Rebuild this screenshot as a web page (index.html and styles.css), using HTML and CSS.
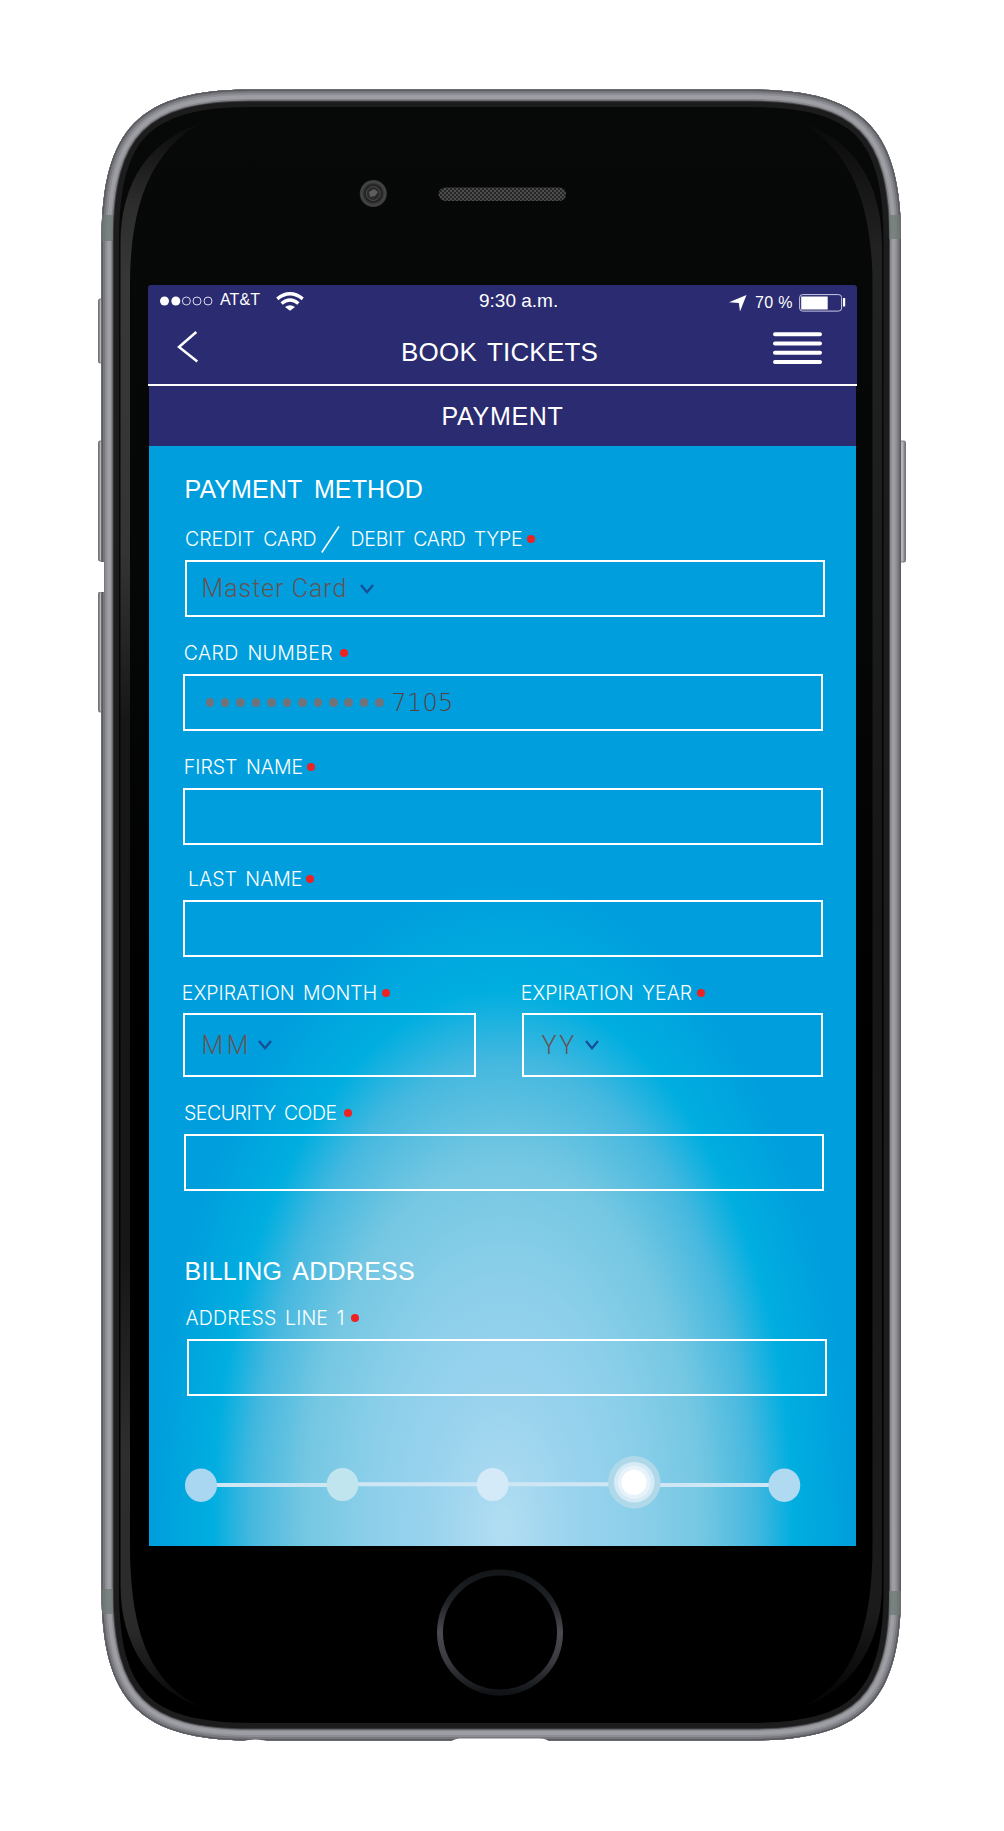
FILE: index.html
```html
<!DOCTYPE html>
<html lang="en">
<head>
<meta charset="utf-8">
<title>Book Tickets – Payment</title>
<link rel="stylesheet" href="styles.css">
</head>
<body>
<div class="phone">
  <svg class="device" width="1004" height="1831" viewBox="0 0 1004 1831" aria-hidden="true">
    <defs>
      <path id="shell" d="M101.5 240C101.5 128 140 89.500 251.500 89.500H751C862.500 89.500 901 128 901 240V1590C901 1702 862.500 1740.500 751 1740.500H251.500C140 1740.500 101.500 1702 101.500 1590Z"/>
      <clipPath id="inside"><use href="#shell"/></clipPath>
      <linearGradient id="sheen" x1="0" y1="0" x2="0" y2="1">
        <stop offset="0" stop-color="#0a0a0a"/><stop offset=".05" stop-color="#2c2c2c"/><stop offset=".1" stop-color="#373737"/><stop offset=".27" stop-color="#343434"/><stop offset=".38" stop-color="#161616"/><stop offset=".72" stop-color="#171717"/><stop offset=".84" stop-color="#2e2e2e"/><stop offset=".95" stop-color="#2a2a2a"/><stop offset="1" stop-color="#050505"/>
      </linearGradient>
      <linearGradient id="sheen-right" x1="0" y1="0" x2="0" y2="1">
        <stop offset="0" stop-color="#0a0a0a"/><stop offset=".08" stop-color="#222"/><stop offset=".5" stop-color="#161616"/><stop offset=".94" stop-color="#1b1b1b"/><stop offset="1" stop-color="#030303"/>
      </linearGradient>
      <linearGradient id="glass" x1="0" y1="0" x2="0" y2="1"><stop offset="0" stop-color="#070808"/><stop offset=".3" stop-color="#050606"/><stop offset=".6" stop-color="#000"/><stop offset="1" stop-color="#000"/></linearGradient>
      <linearGradient id="btn" x1="0" y1="0" x2="1" y2="0">
        <stop offset="0" stop-color="#55555a"/><stop offset=".45" stop-color="#c4c4c9"/><stop offset="1" stop-color="#6a6a70"/>
      </linearGradient>
      <linearGradient id="ring" x1="0" y1="0" x2="0" y2="1">
        <stop offset="0" stop-color="#14171a"/><stop offset=".25" stop-color="#1f2226"/><stop offset=".5" stop-color="#4a4a51"/><stop offset=".75" stop-color="#393a40"/><stop offset="1" stop-color="#111417"/>
      </linearGradient>
      <radialGradient id="lens"><stop offset="0" stop-color="#77777b"/><stop offset=".35" stop-color="#3a3a3d"/><stop offset=".6" stop-color="#1f1f20"/><stop offset=".85" stop-color="#454547"/><stop offset="1" stop-color="#3a3a3b"/></radialGradient>
      <pattern id="mesh" width="4" height="4" patternUnits="userSpaceOnUse"><rect width="4" height="4" fill="#262626"/><path d="M0 0h2v2H0zM2 2h2v2H2z" fill="#4c4c4c"/></pattern>
    </defs>
    <g fill="url(#btn)" stroke="#66666b" stroke-width=".8">
      <rect x="98.500" y="299" width="5" height="64" rx="1.500"/>
      <rect x="98.500" y="441" width="5" height="120" rx="1.500"/>
      <rect x="98.500" y="592" width="5" height="120" rx="1.500"/>
      <rect x="899" y="441" width="6.500" height="121" rx="1.500"/>
    </g>
    <use href="#shell" fill="url(#glass)"/>
    <g clip-path="url(#inside)" fill="none">
      <use href="#shell" stroke="#1c1c1d" stroke-width="35"/>
      <use href="#shell" stroke="#48484c" stroke-width="24"/>
      <use href="#shell" stroke="#85858b" stroke-width="22"/>
      <use href="#shell" stroke="#9d9da4" stroke-width="19"/>
      <use href="#shell" stroke="#8c8c93" stroke-width="11"/>
      <use href="#shell" stroke="#77777e" stroke-width="7"/>
      <use href="#shell" stroke="#5a5a60" stroke-width="3"/>
      <path d="M101 215h12v26h-12zM889 215h12v24h-12zM101 1589h12v25h-12zM889 1591h12v24h-12z" fill="#6f7a76" opacity=".75"/>
    </g>
    <path d="M203 122C150 140 120.500 180 120.500 245V1585C120.500 1645 150 1690 203 1708C160 1688 130 1650 130 1545V285C130 190 160 145 203 122Z" fill="url(#sheen)"/>
    <path d="M801 122C852 140 882 180 882 245V1585C882 1645 852 1690 801 1708C842 1688 872.500 1650 872.500 1545V285C872.500 190 842 145 801 122Z" fill="url(#sheen-right)"/>
    <path d="M98 562h6v30h-6z" fill="#fff"/>
    <path d="M242 1742C250 1738.500 262 1739 270 1742ZM450 1742C456 1738 460 1738.500 466 1738.500H538C544 1738.500 546 1739 550 1742Z" fill="#fff"/>
    <circle cx="373.300" cy="193.500" r="13.500" fill="url(#lens)"/>
    <circle cx="373.300" cy="193.500" r="7" fill="#2a2a2b" stroke="#4c4c4e"/>
    <path d="M369 192l5-3 4 3-3 4-5 1z" fill="#5e5e61"/>
    <rect x="438.500" y="187.500" width="127.500" height="13.500" rx="6.700" fill="url(#mesh)"/>
    <circle cx="500" cy="1632.500" r="60" fill="#000" stroke="url(#ring)" stroke-width="6"/>
  </svg>

  <main class="screen">
    <header class="top">
      <div class="status">
        <div class="carrier">
          <svg width="54" height="10" viewBox="0 0 54 10"><g fill="#fff"><circle cx="4.500" cy="5" r="4.500"/><circle cx="15.800" cy="5" r="4.500"/></g><g fill="none" stroke="#d9d9ee"><circle cx="26.400" cy="5" r="4"/><circle cx="37" cy="5" r="4"/><circle cx="48" cy="5" r="4"/></g></svg>
          <span class="network">AT&amp;T</span>
          <svg width="28" height="19" viewBox="0 0 28 19"><g fill="none" stroke="#fff" stroke-width="3.400"><path d="M1.300 6.800Q14-3.200 26.700 6.800"/><path d="M5.600 11.500Q14 4.500 22.400 11.500"/></g><path d="M9 15Q14 11.300 19 15L14 18.800Z" fill="#fff"/></svg>
        </div>
        <span class="clock">9:30 a.m.</span>
        <div class="power">
          <svg width="18" height="17" viewBox="0 0 18 17"><path d="M17.500 0L11 16.500 9.800 8 0 7.300Z" fill="#fff"/></svg>
          <span class="charge">70 %</span>
          <svg width="47" height="18" viewBox="0 0 47 18"><rect x=".6" y=".6" width="42" height="16.500" rx="3" fill="none" stroke="#c9c9e6"/><path d="M2.200 2.500h26.500v13H2.200zM44 4h2.200v8.500H44z" fill="#fff"/></svg>
        </div>
      </div>
      <div class="nav">
        <svg class="back" width="22" height="32" viewBox="0 0 22 32"><path d="M19.300 1L2 16 20.300 30.500" fill="none" stroke="#fff" stroke-width="2.500"/></svg>
        <h1>BOOK TICKETS</h1>
        <svg width="49" height="33" viewBox="0 0 49 33"><path d="M2 2.300h45M2 11.500h45M2 20.700h45M2 29.900h45" stroke="#fff" stroke-width="4" stroke-linecap="round"/></svg>
      </div>
    </header>
    <div class="subtitle"><h2>PAYMENT</h2></div>
    <form class="form">
      <h3>PAYMENT METHOD</h3>
      <div class="group card-type">
        <label>CREDIT CARD<svg class="slash" width="19" height="27" viewBox="0 0 19 27"><path d="M.8 26.500L18 .5" stroke="#fff" stroke-width="1.500"/></svg><span class="debit">DEBIT CARD TYPE</span><i class="req"></i></label>
        <div class="box"><span class="value">Master Card</span><svg class="chevron" width="14" height="10" viewBox="0 0 14 10"><path d="M1 1L7 8.300 13 1"/></svg></div>
      </div>
      <div class="group number">
        <label>CARD NUMBER<i class="req"></i></label>
        <div class="box"><span class="mask"><i></i><i></i><i></i><i></i><i></i><i></i><i></i><i></i><i></i><i></i><i></i><i></i></span><span class="value digits">7105</span></div>
      </div>
      <div class="group first"><label>FIRST NAME<i class="req"></i></label><div class="box"></div></div>
      <div class="group last"><label>LAST NAME<i class="req"></i></label><div class="box"></div></div>
      <div class="expiry">
        <div class="group month"><label>EXPIRATION MONTH<i class="req"></i></label><div class="box"><span class="value">MM</span><svg class="chevron" width="14" height="10" viewBox="0 0 14 10"><path d="M1 1L7 8.300 13 1"/></svg></div></div>
        <div class="group year"><label>EXPIRATION YEAR<i class="req"></i></label><div class="box"><span class="value">YY</span><svg class="chevron" width="14" height="10" viewBox="0 0 14 10"><path d="M1 1L7 8.300 13 1"/></svg></div></div>
      </div>
      <div class="group code"><label>SECURITY CODE<i class="req"></i></label><div class="box"></div></div>
      <h3 class="billing">BILLING ADDRESS</h3>
      <div class="group address"><label>ADDRESS LINE 1<i class="req"></i></label><div class="box"></div></div>
      <svg class="steps" width="620" height="56" viewBox="184 1456 620 56">
        <path d="M216 1485H327M358 1484.300H477M508 1484.300H609M660 1485H769" stroke="#cfe6f4" stroke-width="4"/>
        <ellipse cx="201" cy="1485.200" rx="16" ry="16.700" fill="#a9d6f1"/>
        <ellipse cx="342.500" cy="1484.500" rx="15.900" ry="16.600" fill="#c1e5ef"/>
        <ellipse cx="492.700" cy="1484.500" rx="15.900" ry="16.600" fill="#d5eaf8"/>
        <circle cx="634.300" cy="1482.300" r="26.200" fill="#afd9e9"/>
        <circle cx="634.300" cy="1482.300" r="20.300" fill="#d7ebf7"/>
        <circle cx="634.300" cy="1482.300" r="16.500" fill="#e6f3fa"/>
        <circle cx="634" cy="1482.300" r="12.600" fill="#fff"/>
        <ellipse cx="784.300" cy="1485.200" rx="15.900" ry="16.800" fill="#afdaf2"/>
      </svg>
    </form>
  </main>
</div>
</body>
</html>
```
FILE: styles.css
```css
* { box-sizing: border-box; margin: 0; padding: 0; }
body { background: #fff; font-family: "Liberation Sans", Arial, sans-serif; color: #fff; }
svg { display: block; flex: none; }

.phone { position: relative; width: 1004px; height: 1831px; padding: 285px 147px 0 148px; }
.device { position: absolute; left: 0; top: 0; }
.screen { position: relative; height: 1260.5px; white-space: nowrap; }

/* Header */
.top { height: 101px; background: #2a2b70; border-radius: 3px 3px 0 0; border-bottom: 2px solid #fff; }
.status { display: grid; grid-template-columns: 319px 1fr auto; align-items: center; height: 32px; padding: 0 11px 0 12px; font-size: 16px; }
.carrier, .power { display: flex; align-items: center; }
.network { margin: 0 16px 2px 6px; letter-spacing: .1px; }
.clock { font-size: 19px; }
.power { padding-top: 4px; }
.charge { margin: 0 6px 0 8px; letter-spacing: .4px; }
.nav { display: flex; align-items: center; height: 66px; padding: 0 35px 4px 29px; }
.back { margin-bottom: 2px; }
h1, h2, h3 { font-weight: 400; font-size: 25px; line-height: 30px; }
h1 { margin: 7px auto 0 202px; font-size: 26px; letter-spacing: .2px; word-spacing: 3px; }
.subtitle { display: flex; justify-content: center; align-items: center; height: 60px; margin: 0 1px; background: #2a2b70; }
h2 { letter-spacing: .7px; }

/* Form */
.form {
  height: 1099.5px; margin: 0 1px; padding: 28px 30px 0 34px;
  background: radial-gradient(350px 650px at 354px 1084px, #b2def2 0, #9ad3ee 20%, #8ccfea 38%, #74c7e2 57%, #45b8df 72%, #00aee0 83%, #009edd 100%);
}
h3 { margin: 0 0 20px; padding-left: 1.5px; letter-spacing: .1px; word-spacing: 5px; }
.billing { margin: 65px 0 17px; letter-spacing: .28px; word-spacing: 4px; }
.group { margin-bottom: 21px; }
label { display: flex; align-items: center; height: 30px; margin-bottom: 6px; font: 300 19.5px/30px Inter, "Liberation Sans", sans-serif; word-spacing: 3px; }
.req { width: 8px; height: 8px; margin-left: 5px; border-radius: 50%; background: #ee2123; }
.box { display: flex; align-items: center; width: 640px; height: 57px; border: 2px solid #fff; }
.value { font: 300 25px/30px Roboto, sans-serif; color: #655453; }
.chevron { fill: none; stroke: #174d92; stroke-width: 2.2; }

.card-type label { margin-left: 2px; }
.card-type .box { margin-left: 2px; padding-left: 14.5px; }
.card-type .value { letter-spacing: 1px; }
.card-type .chevron { margin-left: 12.5px; }
.slash { margin: 0 11px 0 4px; }
.debit { letter-spacing: -.28px; }
.number label { letter-spacing: .37px; padding-left: .7px; }
.number .req { margin-left: 7px; }
.mask { display: flex; gap: 6.95px; margin: 0 7.5px 0 20.5px; }
.mask i { width: 8.5px; height: 8.5px; border-radius: 50%; background: #70737a; }
.digits { font: 200 24px/30px "DejaVu Sans", sans-serif; color: #5a3f3c; letter-spacing: .3px; }
.first label { padding-left: .8px; }
.first .req { margin-left: 4px; }
.last label { padding-left: 5px; }
.last .req { margin-left: 4px; }
.first { margin-bottom: 19px; }
.last { margin-bottom: 20px; }
.expiry { display: flex; gap: 46px; }
.expiry label { height: 31px; margin-bottom: 5px; padding-top: 1px; }
.expiry .box { height: 64px; padding-top: 2px; }
.expiry .chevron { margin-bottom: 2px; }
.month label { margin-left: -1.2px; }
.month .box { width: 293px; padding-left: 16.5px; }
.month .value { letter-spacing: 3.5px; }
.month .chevron { margin-left: 6.5px; }
.year label { margin-left: -1.2px; }
.year .box { width: 301px; padding-left: 17.5px; }
.year .value { letter-spacing: 2.6px; }
.year .chevron { margin-left: 8.5px; }
.code label { padding-left: 1px; letter-spacing: -.48px; }
.code .req { margin-left: 7px; }
.code .box { margin-left: 1px; }
.address { margin-bottom: 0; }
.address label { padding-left: 2.5px; letter-spacing: .15px; }
.address .req { margin-left: 6.5px; }
.address .box { margin-left: 3.5px; }
.steps { margin: 60px 0 0 1px; }
```
